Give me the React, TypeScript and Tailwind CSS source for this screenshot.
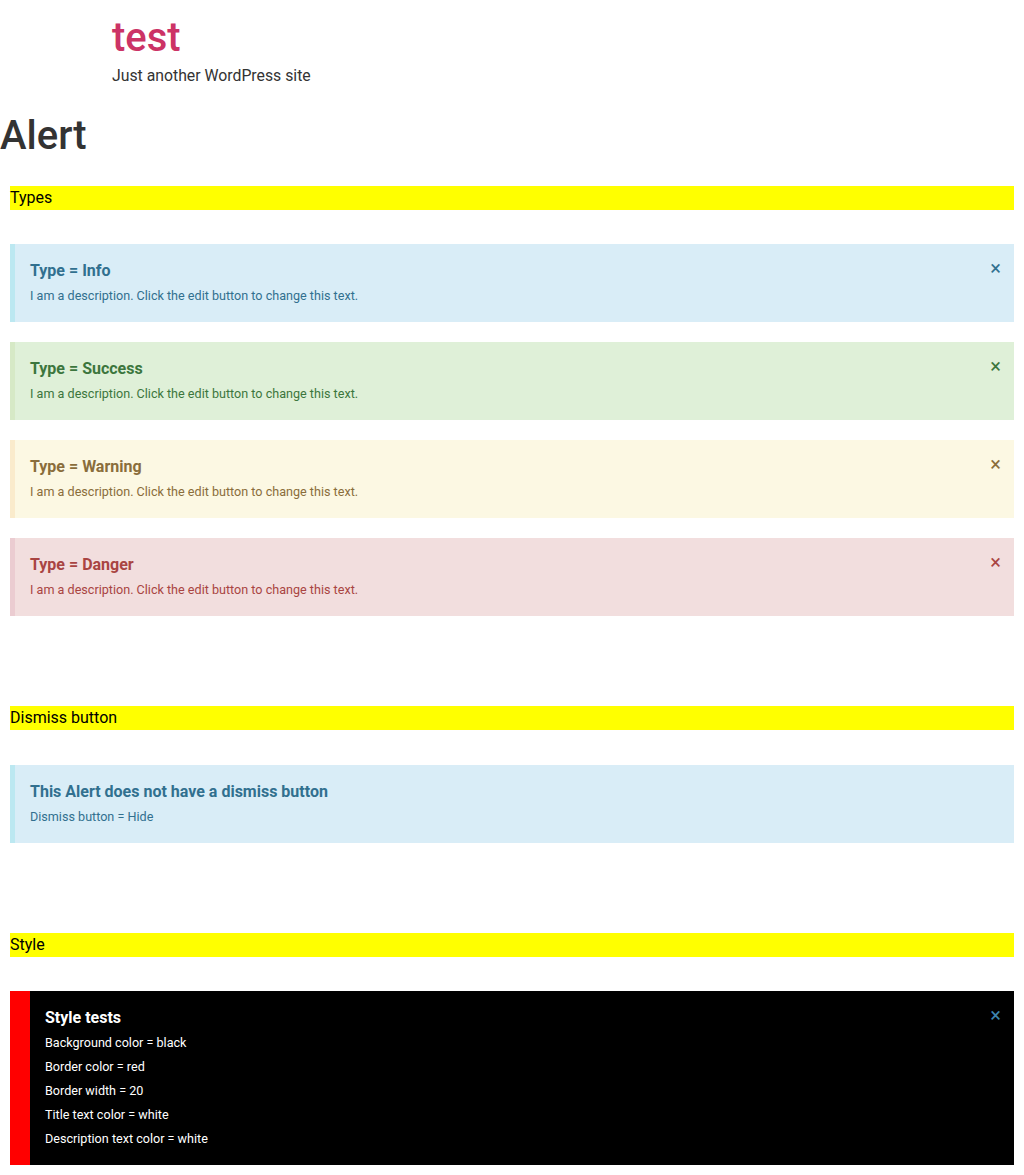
type AlertProps = {
  title: string;
  lines: string[];
  box: string;
  titleColor: string;
  textColor: string;
  closeColor?: string;
  dismiss?: boolean;
};

const Alert = ({ title, lines, box, titleColor, textColor, closeColor, dismiss = true }: AlertProps) => {
  return (
    <div className={`relative px-[15px] pb-[14px] pt-[15px] ${box}`}>
      <span className={`block text-[16px] font-bold leading-6 ${titleColor}`}>{title}</span>
      <div className={`mt-px text-[12.6px] leading-6 ${textColor}`}>
        {lines.map((l) => (
          <div key={l}>{l}</div>
        ))}
      </div>
      {dismiss && (
        <span className={`absolute right-[13px] top-[14px] text-[20px] leading-none ${closeColor ?? titleColor}`}>
          ×
        </span>
      )}
    </div>
  );
};

const SectionBar = ({ label }: { label: string }) => (
  <div className="mx-[10px] h-6 bg-[#ffff00] text-[16px] leading-6 text-black">{label}</div>
);

const desc = ["I am a description. Click the edit button to change this text."];

const App = () => {
  return (
    <main className="min-h-screen w-full bg-white pb-[10px] font-['Roboto','Liberation_Sans',sans-serif] text-[#333]">
      <header className="pl-[112px] pt-[14px]">
        <div className="text-[40px] font-medium leading-[48px] text-[#cc3366]">test</div>
        <p className="mt-[2px] text-[15.8px] leading-6 text-[#333]">Just another WordPress site</p>
      </header>
      <h1 className="mt-[24px] text-[40px] font-medium leading-[48px] text-[#333]">Alert</h1>

      <div className="mt-[26px]">
        <SectionBar label="Types" />
        <div className="mx-[10px] mt-[34px] flex flex-col gap-5">
          <Alert
            title="Type = Info"
            lines={desc}
            box="bg-[#d9edf7] border-l-[5px] border-[#bce8f1]"
            titleColor="text-[#31708f]"
            textColor="text-[#31708f]"
          />
          <Alert
            title="Type = Success"
            lines={desc}
            box="bg-[#dff0d8] border-l-[5px] border-[#d6e9c6]"
            titleColor="text-[#3c763d]"
            textColor="text-[#3c763d]"
          />
          <Alert
            title="Type = Warning"
            lines={desc}
            box="bg-[#fcf8e3] border-l-[5px] border-[#faebcc]"
            titleColor="text-[#8a6d3b]"
            textColor="text-[#8a6d3b]"
          />
          <Alert
            title="Type = Danger"
            lines={desc}
            box="bg-[#f2dede] border-l-[5px] border-[#ebccd1]"
            titleColor="text-[#a94442]"
            textColor="text-[#a94442]"
          />
        </div>
      </div>

      <div className="mt-[90px]">
        <SectionBar label="Dismiss button" />
        <div className="mx-[10px] mt-[35px]">
          <Alert
            title="This Alert does not have a dismiss button"
            lines={["Dismiss button = Hide"]}
            box="bg-[#d9edf7] border-l-[5px] border-[#bce8f1]"
            titleColor="text-[#31708f]"
            textColor="text-[#31708f]"
            dismiss={false}
          />
        </div>
      </div>

      <div className="mt-[90px]">
        <SectionBar label="Style" />
        <div className="mx-[10px] mt-[34px]">
          <Alert
            title="Style tests"
            lines={[
              "Background color = black",
              "Border color = red",
              "Border width = 20",
              "Title text color = white",
              "Description text color = white",
            ]}
            box="bg-black border-l-[20px] border-[#ff0000]"
            titleColor="text-white"
            textColor="text-white"
            closeColor="text-[#3d84ad]"
          />
        </div>
      </div>
    </main>
  );
};

export default App;
